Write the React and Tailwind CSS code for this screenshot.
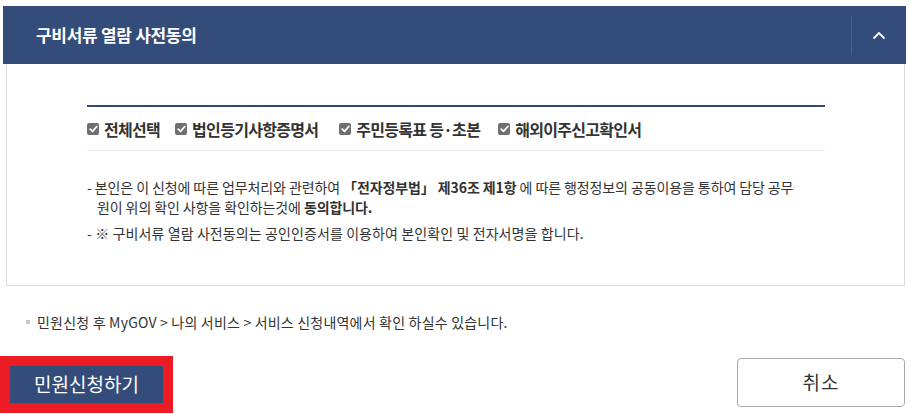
import { useState } from 'react';

const docs = ['전체선택', '법인등기사항증명서', '주민등록표 등·초본', '해외이주신고확인서'];
const gaps = ['', 'ml-[15px]', 'ml-[21px]', 'ml-[18px]'];

function CheckBox() {
  return (
    <span className="flex h-[12px] w-[12px] items-center justify-center rounded-[2px] bg-[#6f6f6f]">
      <svg width="9" height="8" viewBox="0 0 9 8" fill="none">
        <path d="M1.2 4.2 L3.5 6.3 L7.8 1.5" stroke="#fff" strokeWidth="1.8" strokeLinecap="round" strokeLinejoin="round" />
      </svg>
    </span>
  );
}

export default function App() {
  const [open] = useState(true);

  return (
    <div className="h-[414px] w-[911px] overflow-hidden bg-white text-[#333] font-['Noto_Sans_CJK_KR','Noto_Sans',sans-serif]">
      {/* Header */}
      <div className="ml-[3px] mt-[6px] flex h-[58px] w-[903px] items-center justify-between bg-[#344c7a]">
        <h2 className="pl-[33px] text-[17px] font-bold tracking-[-0.3px] text-white">구비서류 열람 사전동의</h2>
        <div className="flex h-[39px] w-[55px] items-center justify-center border-l border-[#4a5f8a]">
          <svg width="14" height="9" viewBox="0 0 14 9" fill="none" className={open ? '' : 'rotate-180'}>
            <path d="M1.5 7.5 L7 2 L12.5 7.5" stroke="#fff" strokeWidth="1.8" />
          </svg>
        </div>
      </div>

      {/* Body */}
      <div className="ml-[6px] h-[222px] w-[899px] border border-t-0 border-[#dcdcdc] pl-[80px] pt-[41px]">
        <div className="w-[738px] border-t-2 border-[#34497a]">
          <div className="flex h-[44px] items-center border-b border-[#e8e8e8]">
            {docs.map((d, i) => (
              <label key={d} className={`flex items-center gap-[5px] ${gaps[i]}`}>
                <CheckBox />
                <span className="text-[16px] font-semibold leading-none tracking-[-0.7px] text-[#333]">{d}</span>
              </label>
            ))}
          </div>

          <div className="pt-[26px] text-[14px] leading-[20px] tracking-[-0.1px] text-[#333]">
            <p className="pl-[10px] -indent-[10px]">
              - 본인은 이 신청에 따른 업무처리와 관련하여 <b>「전자정부법」 제36조 제1항</b> 에 따른 행정정보의 공동이용을 통하여 담당 공무
              <br />
              원이 위의 확인 사항을 확인하는것에 <b>동의합니다.</b>
            </p>
            <p className="mt-[6px] pl-[10px] -indent-[10px] tracking-[0.1px]">
              - ※ 구비서류 열람 사전동의는 공인인증서를 이용하여 본인확인 및 전자서명을 합니다.
            </p>
          </div>
        </div>
      </div>

      {/* Note */}
      <div className="mt-[27px] flex items-center pl-[26px] text-[14px] leading-[18px] tracking-[0.2px] text-[#333]">
        <span className="mr-[7px] h-[4px] w-[4px] bg-[#c8c8c8]" />
        <span>민원신청 후 MyGOV &gt; 나의 서비스 &gt; 서비스 신청내역에서 확인 하실수 있습니다.</span>
      </div>

      {/* Buttons */}
      <div className="mt-[25px] flex items-start justify-between pr-[6px]">
        <div className="bg-[#ed1c24] p-[10px]">
          <button className="h-[37px] w-[153px] bg-[#344c7a] text-[19px] text-white">민원신청하기</button>
        </div>
        <button className="mt-[2px] h-[49px] w-[168px] rounded-[4px] border border-[#aaa] bg-white text-[19px] tracking-[1px] text-[#333]">
          취소
        </button>
      </div>
    </div>
  );
}
